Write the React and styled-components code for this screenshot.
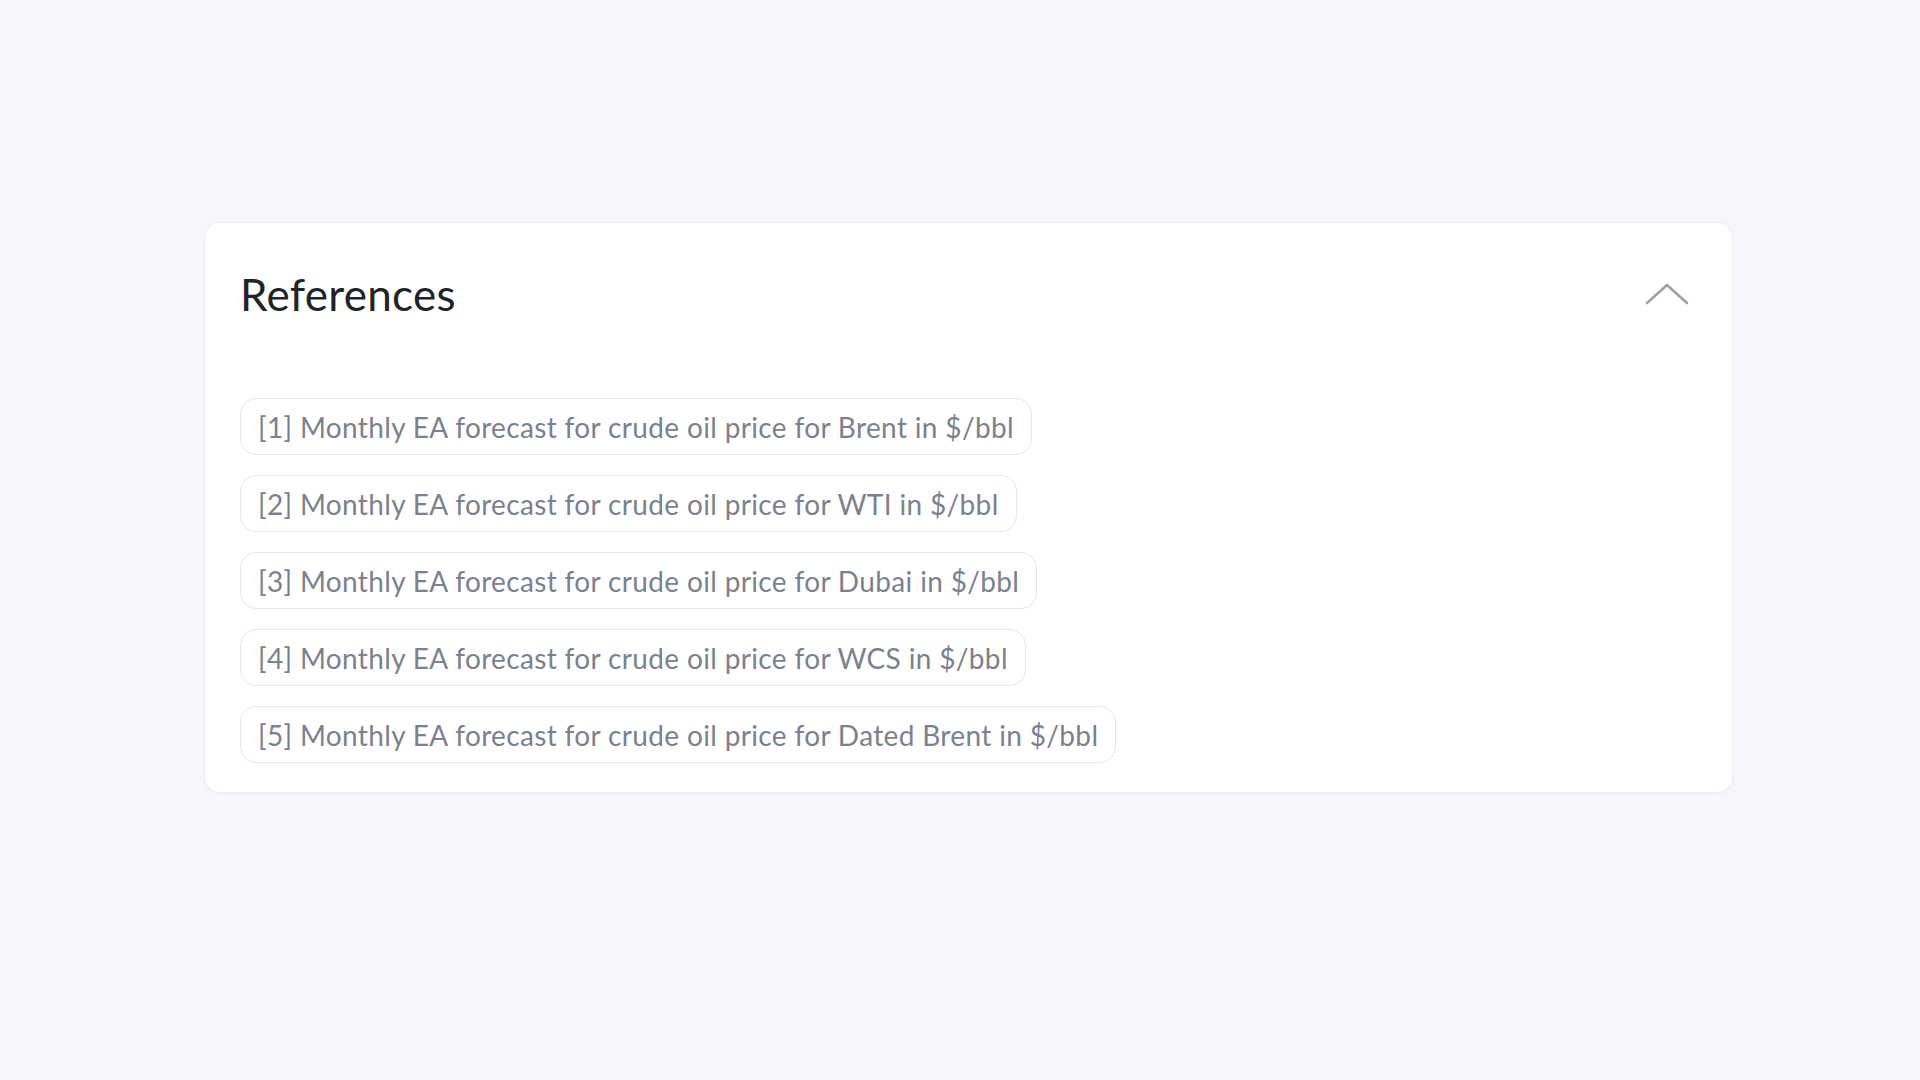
import React from 'react';
import styled, { createGlobalStyle } from 'styled-components';

const GlobalStyle = createGlobalStyle`
	html, body {
		margin: 0;
		padding: 0;
		background: #f6f7fa;
		font-family: Lato, "Open Sans", sans-serif;
	}
`;

const Page = styled.main`
	min-height: 100vh;
	padding: 222px 187px 0 204px;
	box-sizing: border-box;
`;

const Card = styled.section`
	background: #fff;
	border: 1px solid #eceef2;
	border-radius: 16px;
	box-shadow: 0 1px 3px rgba(30, 40, 60, 0.03);
	padding: 0 43px 29px 35px;
`;

const Header = styled.header`
	display: flex;
	align-items: center;
	justify-content: space-between;
	height: 175px;
	padding-bottom: 33px;
	box-sizing: border-box;
`;

const Title = styled.h2`
	margin: 0;
	font-size: 44px;
	font-weight: 400;
	color: #1f2428;
	letter-spacing: 0.3px;
`;

const Toggle = styled.button`
	border: 0;
	background: none;
	padding: 0;
	display: flex;
	cursor: pointer;
`;

const List = styled.ul`
	list-style: none;
	margin: 0;
	padding: 0;
	display: flex;
	flex-direction: column;
	align-items: flex-start;
	gap: 20px;
`;

const Chip = styled.li`
	height: 57px;
	box-sizing: border-box;
	display: flex;
	align-items: center;
	padding: 0 17px;
	border: 1px solid #e5e7eb;
	border-radius: 16px;
	font-size: 28px;
	letter-spacing: 0.35px;
	color: #7b818e;
	white-space: nowrap;
`;

const refs = [
	'Brent',
	'WTI',
	'Dubai',
	'WCS',
	'Dated Brent',
];

export default function App() {
	return (
		<>
			<GlobalStyle />
			<Page>
				<Card>
					<Header>
						<Title>References</Title>
						<Toggle aria-label="Collapse">
							<svg width="44" height="22" viewBox="0 0 44 22" fill="none">
								<polyline points="2,20 22,2 42,20" stroke="#9da2a9" strokeWidth="2.6" strokeLinecap="round" strokeLinejoin="round" />
							</svg>
						</Toggle>
					</Header>
					<List>
						{refs.map((r, i) => (
							<Chip key={r}>[{i + 1}] Monthly EA forecast for crude oil price for {r} in $/bbl</Chip>
						))}
					</List>
				</Card>
			</Page>
		</>
	);
}
